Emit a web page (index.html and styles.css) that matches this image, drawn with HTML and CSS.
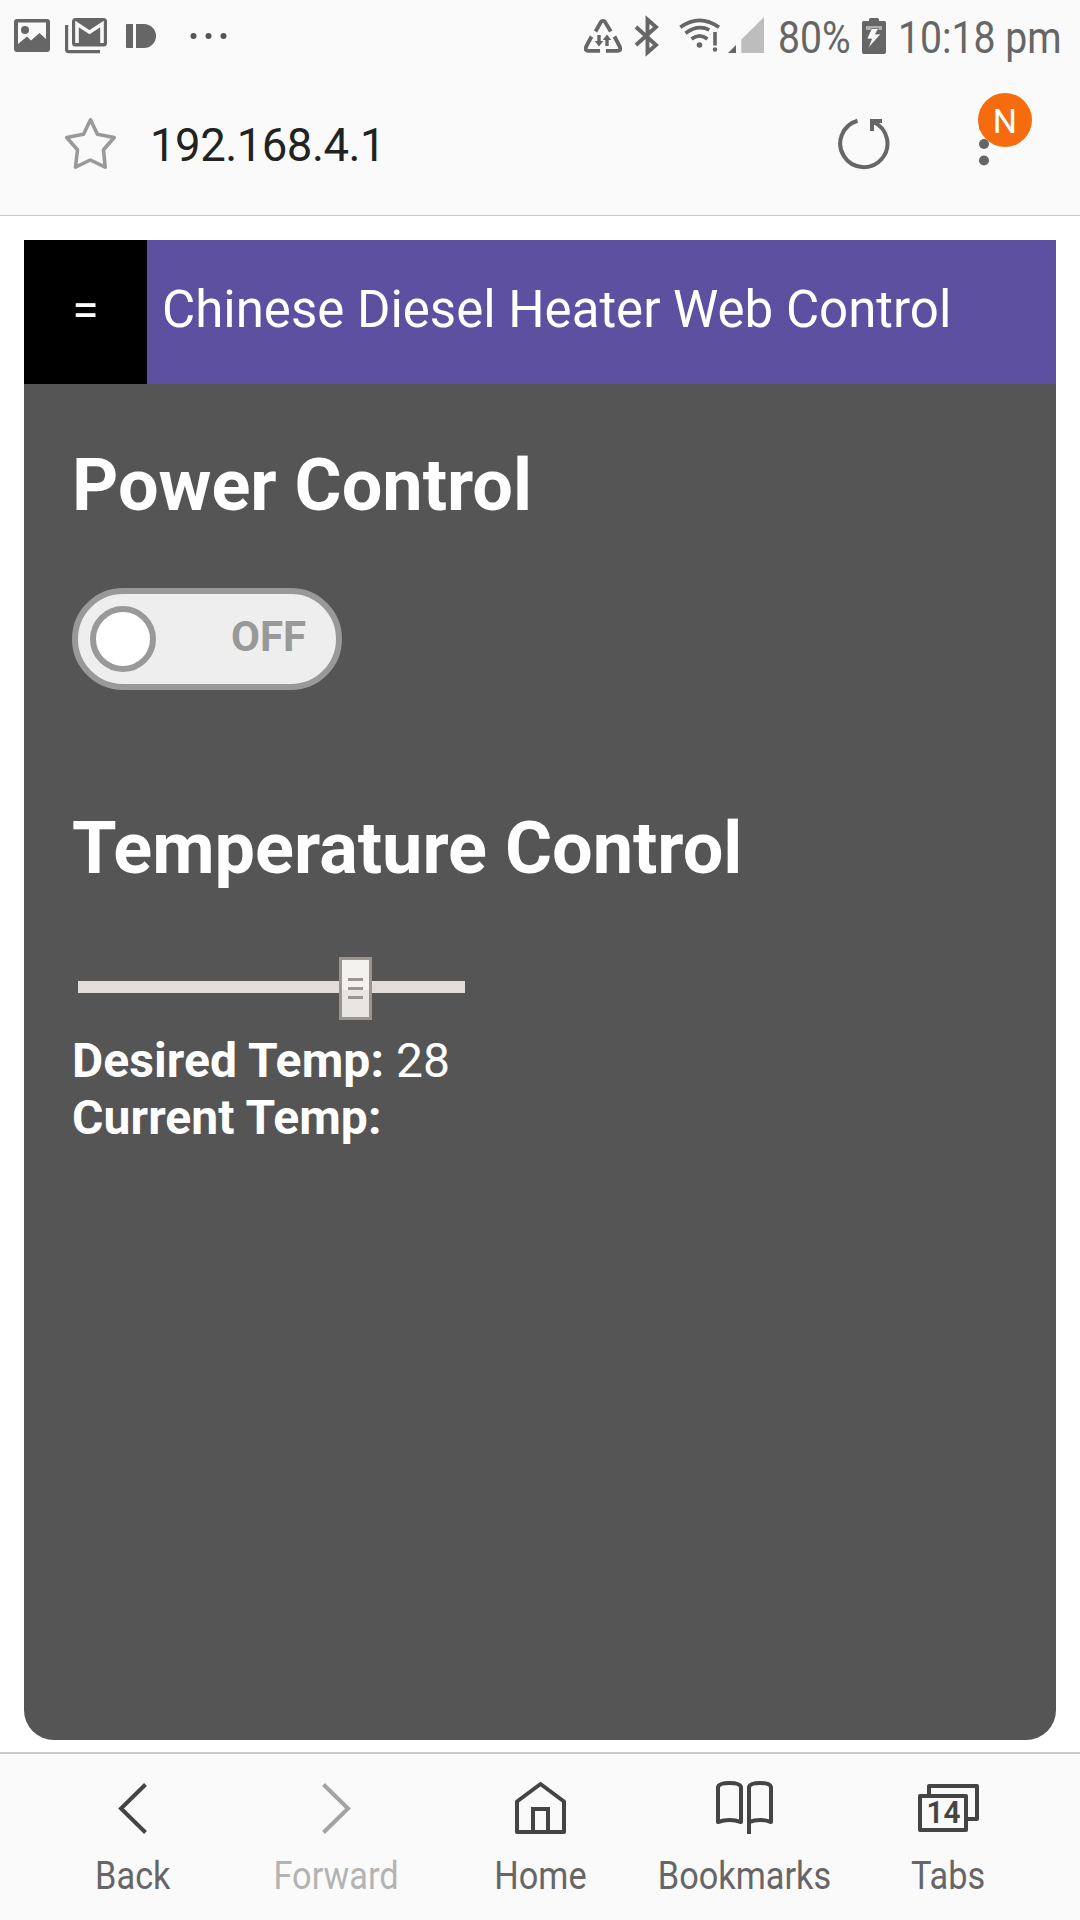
FILE: index.html
```html
<!DOCTYPE html>
<html lang="en">
<head>
<meta charset="utf-8">
<title>Chinese Diesel Heater Web Control</title>
<link rel="stylesheet" href="styles.css">
</head>
<body>
<div class="status">
  <div class="status-left">
    <svg width="36" height="72" viewBox="14 0 36 72"><path fill="#666" fill-rule="evenodd" d="M17 19H47Q50 19 50 22V49Q50 52 47 52H17Q14 52 14 49V22Q14 19 17 19ZM18 22.500V44L27 36.500L31 40.500L39.500 33L46 39V22.500Z"/><circle cx="25" cy="30" r="4" fill="#666"/></svg>
    <svg width="42" height="72" viewBox="65 0 42 72"><path fill="none" stroke="#666" stroke-width="3.200" d="M66.600 25V49.500Q66.600 51.700 69 51.700H100"/><rect x="72" y="18" width="35" height="28.500" rx="3.500" fill="#666"/><path fill="none" stroke="#fafafa" stroke-width="3.600" d="M77 43V24L89.500 32.200L102 24V43"/></svg>
    <svg width="30" height="72" viewBox="126 0 30 72"><path fill="#666" d="M127 24H133V48H127Q126 48 126 47V25Q126 24 127 24ZM136 24H144A12 12 0 0 1 144 48H136Z"/></svg>
    <svg width="37" height="72" viewBox="190 0 37 72" fill="#555"><circle cx="193.500" cy="36" r="3"/><circle cx="208.500" cy="36" r="3"/><circle cx="223.500" cy="36" r="3"/></svg>
  </div>
  <div class="status-right">
    <svg width="38" height="72" viewBox="584 0 38 72"><g fill="none" stroke="#666" stroke-width="3.800"><path d="M595.500 31.500L601 22Q601.500 20.800 603 20.800Q604.500 20.800 605 22L610.800 31.500"/><path d="M591.500 36.500L586.200 46.500Q584.600 50.900 588.500 50.900H600"/><path d="M614.500 36.500L619.700 46.500Q621.400 50.900 617.500 50.900H606"/></g><path fill="#666" d="M597.300 35H600.700V41H603.300L599 46.500L594.700 41H597.300ZM605.300 46V40H602.700L607 34.500L611.300 40H608.700V46Z"/></svg>
    <svg width="26" height="72" viewBox="634 0 26 72"><path fill="none" stroke="#666" stroke-width="3.900" d="M636 27L656 45L647.500 52.500V19.500L656 27L636 45"/></svg>
    <svg width="42" height="72" viewBox="679 0 42 72"><g fill="none" stroke="#666" stroke-width="3.600"><path d="M680.300 27.300Q699.500 13.300 719 27.300"/><path d="M685.500 33.200Q697.500 24.200 709.300 29.800"/><path d="M691.500 39Q699.500 32.600 707.500 39"/><path d="M715 32V45.500"/></g><circle cx="699.500" cy="45" r="2.800" fill="#666"/><circle cx="715" cy="49.500" r="2.200" fill="#666"/></svg>
    <svg width="36" height="72" viewBox="728 0 36 72"><path fill="#bdbdbd" d="M764 17V53H741.300V39.500Z"/><path fill="#666" d="M728 53L736 45V53Z"/></svg>
    <span class="pct"><b>80%</b></span>
    <svg width="24" height="72" viewBox="862 0 24 72"><path fill="#666" d="M869 21V19.500Q869 18 870.500 18H877.500Q879 18 879 19.500V21H884.500Q886 21 886 22.500V52Q886 54 884 54H864Q862 54 862 52V22.500Q862 21 863.500 21Z"/><path fill="#b0b0b0" d="M866 26H882V30H866Z"/><path fill="#fafafa" stroke="#666" stroke-width=".8" d="M871.500 28.500H878.500L875.500 34H881L868 48.500L871.500 39H866.800Z"/></svg>
    <span class="time"><b>10:18 pm</b></span>
  </div>
</div>
<header class="address">
  <svg width="54" height="144" viewBox="63 72 54 144"><path fill="none" stroke="#999" stroke-width="3.600" stroke-linejoin="round" d="M90.500 119.800L97.400 134.300L114.200 137.500L103.500 149.800L105.200 167.200L90.300 160L75.500 167.200L77.500 149.800L66.700 137.500L83.500 134.300Z"/></svg>
  <span class="url">192.168.4.1</span>
  <svg class="reload" width="54" height="144" viewBox="837 72 54 144"><path fill="none" stroke="#666" stroke-width="4" d="M858.500 120.800A23.600 23.600 0 1 0 874.500 122"/><path fill="#666" d="M871 119H883V123H878L875 125V131H871Z"/></svg>
  <div class="more">
    <svg width="12" height="144" viewBox="978 72 12 144" fill="#666"><circle cx="984" cy="127" r="5"/><circle cx="984" cy="144" r="5"/><circle cx="984" cy="160.500" r="5"/></svg>
    <span class="badge">N</span>
  </div>
</header>
<main class="page">
  <section class="card">
    <div class="titlebar"><button class="menu">=</button><div class="title">Chinese Diesel Heater Web Control</div></div>
    <div class="content">
      <h1>Power Control</h1>
      <div class="switch"><i class="knob"></i><span>OFF</span></div>
      <h1 class="temp-heading">Temperature Control</h1>
      <div class="slider">
        <svg class="thumb" width="33" height="63"><path fill="#9b958d" d="M0 0H33V63H0Z"/><path fill="#f3f2ee" d="M3 3H30V33H3Z"/><path fill="#e9e5e2" d="M3 33H30V60H3Z"/><path fill="#9b958d" d="M9 21H24V24H9ZM9 30H24V33H9ZM9 39H24V42H9Z"/></svg>
      </div>
      <p><strong>Desired Temp:</strong> 28</p>
      <p><strong>Current Temp:</strong></p>
    </div>
  </section>
</main>
<nav class="nav">
  <a><svg width="60" height="60" viewBox="102 1778 60 60"><path d="M145.500 1784.500L121 1808.500L145.500 1832.500"/></svg><span>Back</span></a>
  <a class="disabled"><svg width="60" height="60" viewBox="306 1778 60 60"><path d="M323.500 1784.500L348 1808.500L323.500 1832.500"/></svg><span>Forward</span></a>
  <a><svg width="60" height="60" viewBox="510 1778 60 60"><path stroke-linejoin="round" d="M517 1832V1801.500L540.500 1784L564 1801.500V1832Z"/><path d="M533 1832V1809H548V1832"/></svg><span>Home</span></a>
  <a><svg width="60" height="60" viewBox="714 1778 60 60"><path stroke-linejoin="round" d="M718 1822V1787Q719 1783 729.500 1783Q740 1783 741 1787V1822Q729.500 1818 718 1822ZM749 1834V1787Q750 1783 760 1783Q770 1783 771 1787V1822Q760 1818 749 1822"/></svg><span>Bookmarks</span></a>
  <a><svg width="64" height="60" viewBox="916 1778 64 60"><path stroke-linejoin="round" d="M920 1796H966V1830H920ZM929 1795V1786H977V1819H968"/><text x="943.500" y="1823" textLength="34" lengthAdjust="spacingAndGlyphs">14</text></svg><span>Tabs</span></a>
</nav>
</body>
</html>
```
FILE: styles.css
```css
* { box-sizing: border-box; }
body {
  margin: 0;
  width: 1080px;
  height: 1920px;
  display: flex;
  flex-direction: column;
  font-family: Roboto, "Liberation Sans", sans-serif;
  background: #fff;
  overflow: hidden;
}
svg { display: block; flex: none; }

.status {
  height: 72px;
  display: flex;
  justify-content: space-between;
  background: #fafafa;
  color: #666;
}
.status-left, .status-right { display: flex; }
.status-left { padding-left: 14px; }
.status-left svg + svg { margin-left: 15px; }
.status-left svg:nth-child(3) { margin-left: 19px; }
.status-left svg:nth-child(4) { margin-left: 34px; }
.status-right svg:nth-child(2) { margin-left: 12px; }
.status-right svg:nth-child(3) { margin-left: 19px; }
.status-right svg:nth-child(4) { margin-left: 7px; }
.pct, .time {
  font-size: 45px;
  line-height: 76px;
  white-space: nowrap;
}
.pct { width: 84px; margin-left: 14px; }
.time { width: 182px; margin-left: 12px; }
.pct b, .time b {
  display: block;
  width: max-content;
  font-weight: 400;
  transform: scaleX(.87);
  transform-origin: left;
}

.address {
  height: 144px;
  padding: 0 48px 0 63px;
  display: flex;
  background: #fafafa;
  border-bottom: 1px solid #ccc;
}
.url {
  margin-left: 33px;
  font-size: 45.500px;
  line-height: 148px;
  letter-spacing: -.5px;
  color: #222;
}
.reload { margin-left: auto; }
.more { position: relative; width: 54px; margin-left: 88px; }
.badge {
  position: absolute;
  left: 0;
  top: 21px;
  width: 54px;
  height: 54px;
  border-radius: 50%;
  background: #f66b0e;
  color: #fff;
  font-size: 34px;
  line-height: 57px;
  text-align: center;
}

.page { flex: 1; padding: 24px 24px 12px; }
.card {
  height: 1500px;
  background: #555;
  border-radius: 0 0 30px 30px;
  color: #fff;
}
.titlebar { height: 144px; display: flex; background: #5e50a1; }
.menu {
  width: 123px;
  padding: 0 0 5px;
  border: 0;
  background: #000;
  color: #fff;
  font: 48px/1 Roboto, sans-serif;
}
.title { padding-left: 15px; font-size: 51px; line-height: 140px; white-space: nowrap; }
.content { padding: 50px 48px 48px; }
h1 { margin: 0; font-size: 72px; line-height: 104px; font-weight: 700; }
.switch {
  width: 270px;
  height: 102px;
  margin-top: 50px;
  padding: 0 30px 0 12px;
  display: flex;
  align-items: center;
  justify-content: space-between;
  border: 6px solid #999;
  border-radius: 51px;
  background: #eee;
  color: #999;
  font-size: 42px;
  font-weight: 700;
}
.switch span { margin-top: -6px; }
.knob {
  width: 66px;
  height: 66px;
  border: 6px solid #999;
  border-radius: 50%;
  background: #fff;
}
.temp-heading { margin-top: 107px; }
.slider {
  position: relative;
  width: 387px;
  height: 12px;
  margin: 80px 0 39px 6px;
  background: #e2ddd8;
}
.thumb { position: absolute; left: 261px; top: -24px; }
p { margin: 0; font-size: 48px; line-height: 57px; letter-spacing: .09px; }

.nav {
  height: 168px;
  padding: 24px 30px 0;
  display: grid;
  grid-template-columns: repeat(5, 1fr);
  background: #fafafa;
  border-top: 2px solid #ccc;
  color: #666;
}
.nav a { display: flex; flex-direction: column; align-items: center; }
.nav svg { fill: none; stroke: #444; stroke-width: 4; }
.nav text { fill: #444; stroke: none; font-size: 31px; font-weight: 600; text-anchor: middle; }
.nav span { margin-top: 15px; padding-left: 1px; font-size: 39px; line-height: 46px; transform: scaleX(.88); }
.nav .disabled { color: #b3b3b3; }
.nav .disabled svg { stroke: #a3a3a3; }
```
